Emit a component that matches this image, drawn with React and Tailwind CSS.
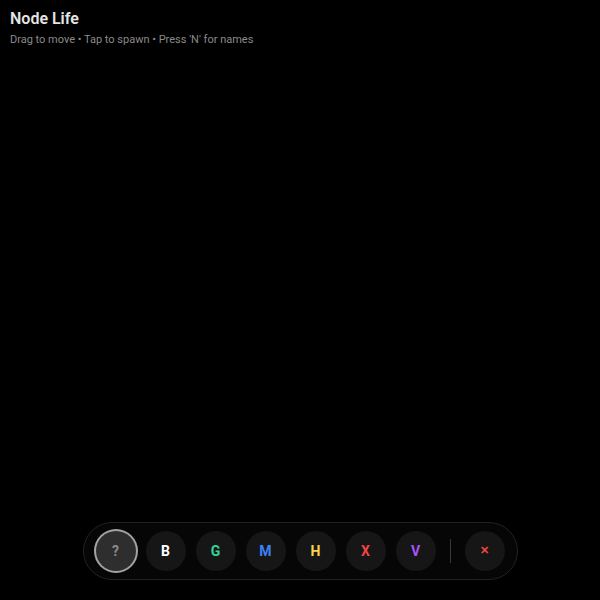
import React from "react";

const buttons = [
  { l: "B", c: "text-white" },
  { l: "G", c: "text-[#34d399]" },
  { l: "M", c: "text-[#3b82f6]" },
  { l: "H", c: "text-[#fcd34d]" },
  { l: "X", c: "text-[#ef4444]" },
  { l: "V", c: "text-[#a855f7]" },
];

export default function App() {
  return (
    <div className="h-screen w-full bg-black flex flex-col justify-between font-['Roboto',sans-serif] select-none">
      <div className="px-2.5 pt-[9px]">
        <h1 className="text-base font-semibold text-[#e5e5e5] leading-5">Node Life</h1>
        <p className="text-[11px] text-[#8a8a8a] mt-[3px] leading-4">
          Drag to move • Tap to spawn • Press 'N' for names
        </p>
      </div>
      <div className="flex justify-center mb-5">
        <div className="flex items-center gap-2.5 px-3 py-2 rounded-full border border-[#222222] bg-[#060606]">
          <button className="w-10 h-10 rounded-full bg-[#2e2e2e] ring-2 ring-[#a3a3a3] flex items-center justify-center text-sm font-bold text-[#8a8a8a]">
            ?
          </button>
          {buttons.map((b) => (
            <button
              key={b.l}
              className={`w-10 h-10 rounded-full bg-[#161616] flex items-center justify-center text-sm font-bold ${b.c}`}
            >
              {b.l}
            </button>
          ))}
          <div className="w-px h-6 bg-[#3a3a3a] mx-1" />
          <button className="w-10 h-10 rounded-full bg-[#161616] flex items-center justify-center text-[11px] font-bold text-[#ef4444]">
            ✕
          </button>
        </div>
      </div>
    </div>
  );
}
